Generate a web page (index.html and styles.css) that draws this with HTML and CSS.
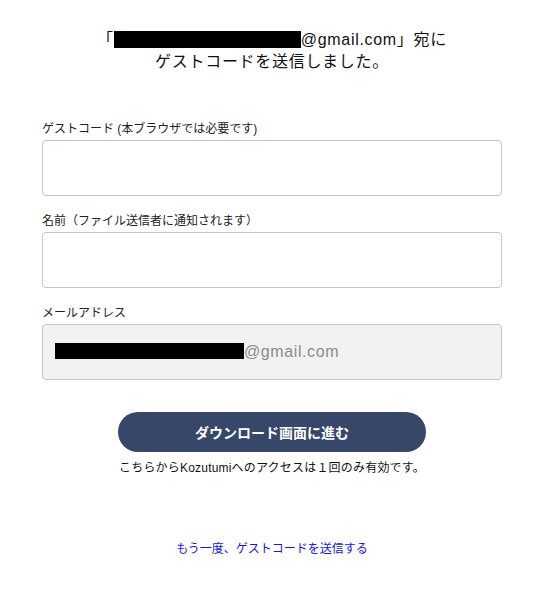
FILE: index.html
```html
<!DOCTYPE html>
<html lang="ja">
<head>
  <meta charset="UTF-8" />
  <meta name="viewport" content="width=device-width, initial-scale=1.0"/>
  <title>ゲストコード</title>
  <link rel="stylesheet" href="styles.css">
</head>
<body>

  <div class="container">
    <!-- Message -->
    <p class="message">
      「<span class="redact redact-head"></span>@gmail.com」宛に<br>
      ゲストコードを送信しました。
    </p>

    <!-- Form -->
    <div class="group">
      <label>ゲストコード (本ブラウザでは必要です)</label>
      <input type="text" class="field" />
    </div>

    <div class="group">
      <label>名前（ファイル送信者に通知されます）</label>
      <input type="text" class="field" />
    </div>

    <div class="group">
      <label>メールアドレス</label>
      <div class="field readonly"><span class="redact redact-mail"></span>@gmail.com</div>
    </div>

    <button class="submit">ダウンロード画面に進む</button>
    <p class="note">こちらからKozutumiへのアクセスは１回のみ有効です。</p>

    <a class="resend" href="#">もう一度、ゲストコードを送信する</a>
  </div>

</body>
</html>
```

FILE: styles.css
```css
body {
  font-family: "Liberation Sans", "Noto Sans CJK JP", sans-serif;
  background-color: #fff;
  color: #222;
  margin: 0;
}

.container {
  width: 460px;
  margin: 0 0 0 42px;
  padding-top: 29px;
  text-align: center;
}

.message {
  font-size: 16px;
  line-height: 22px;
  letter-spacing: 0.7px;
  margin: 0 0 48px;
  color: #111;
}

.redact {
  display: inline-block;
  background-color: #000;
  vertical-align: middle;
}

.redact-head {
  width: 187px;
  height: 17px;
  margin-top: -3px;
}

.redact-mail {
  width: 189px;
  height: 16px;
  margin-top: -2px;
}

.group {
  text-align: left;
  margin-bottom: 17px;
}

.group label {
  display: block;
  font-size: 12px;
  line-height: 17px;
  margin-bottom: 2px;
  color: #222;
}

.field {
  display: block;
  box-sizing: border-box;
  width: 100%;
  height: 56px;
  border: 1px solid #c6c6c6;
  border-radius: 4px;
  background-color: #fff;
  font-size: 16px;
  padding: 0 12px;
  margin: 0;
}

.readonly {
  display: flex;
  align-items: center;
  background-color: #f2f2f2;
  color: #8a8a8a;
  letter-spacing: 0.6px;
}

.submit {
  display: block;
  width: 308px;
  height: 40px;
  margin: 32px 0 0 76px;
  border: none;
  border-radius: 20px;
  background-color: #36476a;
  color: #fff;
  font-family: inherit;
  font-size: 14px;
  font-weight: bold;
  cursor: pointer;
}

.note {
  font-size: 12px;
  line-height: 16px;
  letter-spacing: 0.2px;
  margin: 8px 0 0;
  color: #111;
}

.resend {
  display: inline-block;
  margin-top: 65px;
  font-size: 12px;
  line-height: 16px;
  color: #1515e6;
  text-decoration: none;
}
```
